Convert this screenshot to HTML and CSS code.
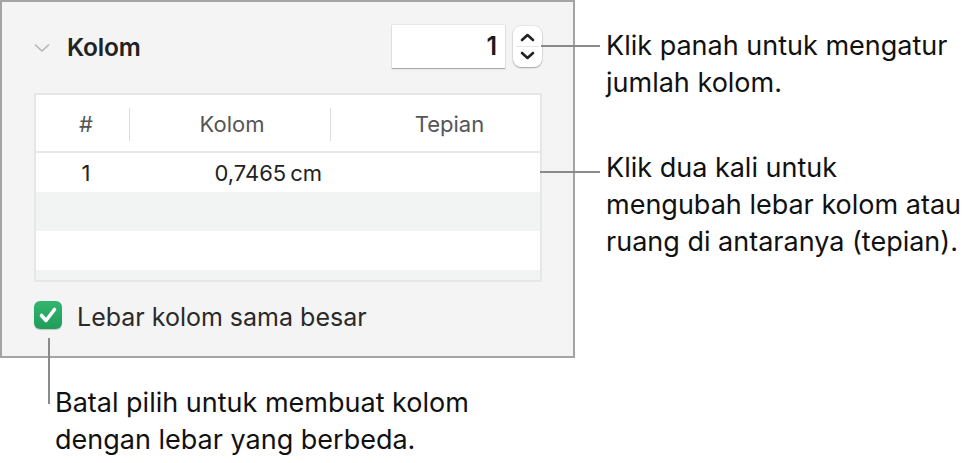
FILE: index.html
```html
<!DOCTYPE html>
<html lang="id">
<head>
<meta charset="utf-8">
<link rel="stylesheet" href="styles.css">
</head>
<body>
<div class="page">
  <div class="left">
    <div class="panel">
      <div class="head">
        <svg class="disclosure" width="16" height="10" viewBox="0 0 16 10"><path d="M1.5 2 L8 8 L14.5 2" fill="none" stroke="#b4b4b4" stroke-width="1.6" stroke-linecap="round" stroke-linejoin="round"/></svg>
        <span class="title">Kolom</span>
        <div class="field">1</div>
        <div class="stepper">
          <svg width="29" height="41" viewBox="0 0 29 41"><path d="M9 14 L14.5 9 L20 14" fill="none" stroke="#222" stroke-width="2.6" stroke-linecap="round" stroke-linejoin="round"/><line x1="3" y1="20.5" x2="26" y2="20.5" stroke="#e6e6e6" stroke-width="1"/><path d="M9 27 L14.5 32 L20 27" fill="none" stroke="#222" stroke-width="2.6" stroke-linecap="round" stroke-linejoin="round"/></svg>
        </div>
      </div>
      <div class="table">
        <div class="thead">
          <div class="th c1">#</div>
          <div class="th c2">Kolom</div>
          <div class="th c3">Tepian</div>
        </div>
        <div class="row">
          <div class="td c1">1</div>
          <div class="td c2">0,7465<span class="unit">cm</span></div>
          <div class="td c3"></div>
        </div>
        <div class="row alt"></div>
        <div class="row"></div>
        <div class="row alt"></div>
      </div>
      <div class="check-row">
        <span class="checkbox">
          <svg width="28" height="28" viewBox="0 0 28 28"><path d="M7.5 14.5 L12 19.5 L20.5 8.5" fill="none" stroke="#fff" stroke-width="3.6" stroke-linecap="round" stroke-linejoin="round"/></svg>
        </span>
        <span class="check-label">Lebar kolom sama besar</span>
      </div>
    </div>
    <p class="note note-bottom">Batal pilih untuk membuat kolom<br>dengan lebar yang berbeda.</p>
  </div>
  <div class="right">
    <p class="note note-1">Klik panah untuk mengatur<br>jumlah kolom.</p>
    <p class="note note-2">Klik dua kali untuk<br>mengubah lebar kolom atau<br>ruang di antaranya (tepian).</p>
  </div>
</div>
</body>
</html>
```
FILE: styles.css
```css
* { box-sizing: border-box; }
html, body { margin: 0; padding: 0; background: #fff; }
body {
  font-family: Inter, "Noto Sans", "Liberation Sans", sans-serif;
  color: #1d1d1f;
  width: 979px;
  height: 463px;
  overflow: hidden;
}
.page { display: flex; align-items: flex-start; }
.left { width: 575px; flex: none; }
.panel {
  width: 575px;
  height: 358px;
  background: #f4f4f4;
  border: 2px solid #a4a4a4;
  padding: 23px 31px 0 32px;
}
.head {
  display: flex;
  align-items: center;
  height: 43px;
}
.disclosure { margin-right: 17px; margin-top: 2px; }
.title {
  font-size: 24.5px;
  font-weight: 600;
  color: #222;
  flex: 1;
  letter-spacing: -0.2px;
}
.field {
  width: 113px;
  height: 43px;
  background: #fff;
  box-shadow: 0 1px 1px rgba(0,0,0,0.28), 0 0 0 1px rgba(0,0,0,0.04);
  font-size: 25px;
  font-weight: 600;
  text-align: right;
  padding-right: 8px;
  line-height: 43px;
  color: #1a1a1a;
}
.stepper {
  margin-left: 8px;
  width: 29px;
  height: 41px;
  background: #fff;
  border-radius: 8px;
  box-shadow: 0 1px 1.5px rgba(0,0,0,0.3), 0 0 0 0.5px rgba(0,0,0,0.1);
  display: flex;
}
.table {
  margin-top: 25px;
  height: 189px;
  background: #fff;
  border: 2px solid #e6e6e6;
  overflow: hidden;
  font-size: 22px;
}
.thead {
  display: grid;
  grid-template-columns: 93px 201px 1fr;
  height: 58px;
  padding-top: 3px;
  border-bottom: 2px solid #e8e8e8;
  align-items: center;
  color: #555;
}
.th { text-align: center; height: 33px; line-height: 33px; }
.thead .c2, .thead .c3 { border-left: 1px solid #dedede; }
.thead .c1 { padding-left: 7px; }
.thead .c2 { padding-left: 4px; }
.thead .c3 { padding-left: 28px; }
.row {
  display: grid;
  grid-template-columns: 93px 201px 1fr;
  height: 39px;
  align-items: center;
  color: #222;
}
.row.alt { background: #f2f3f3; }
.td.c1 { text-align: center; padding-left: 7px; }
.td.c2 { text-align: right; padding-right: 8px; }
.unit { margin-left: 4px; }
.check-row {
  display: flex;
  align-items: center;
  margin-top: 19px;
  height: 28px;
}
.checkbox {
  width: 28px;
  height: 28px;
  border-radius: 6px;
  background: linear-gradient(#33b670, #1f9c58);
  box-shadow: 0 1px 1px rgba(0,0,0,0.2);
  display: flex;
  flex: none;
}
.check-label {
  margin-left: 15px;
  font-size: 25px;
  color: #2a2a2a;
  margin-top: 3px;
}
.note {
  margin: 0;
  font-size: 27px;
  line-height: 37px;
  color: #111;
  position: relative;
}
.note::before {
  content: "";
  position: absolute;
  background: #8a8a8a;
}
.note-bottom {
  margin-left: 55px;
  margin-top: 26px;
}
.note-bottom::before {
  left: -7px;
  top: -46px;
  width: 2px;
  height: 66px;
}
.right { padding-left: 31px; }
.note-1 { margin-top: 27px; }
.note-1::before {
  left: -65px;
  top: 18px;
  width: 59px;
  height: 2px;
}
.note-2 { margin-top: 48px; }
.note-2::before {
  left: -66px;
  top: 22px;
  width: 60px;
  height: 2px;
}
```
